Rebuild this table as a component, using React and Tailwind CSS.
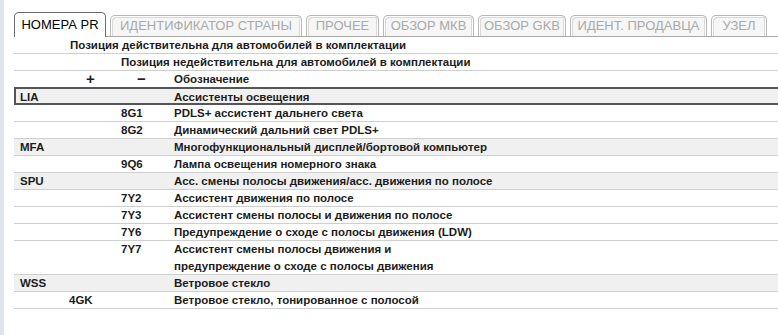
const tabs = [
  { label: "НОМЕРА PR", w: "w-[92px]", active: true },
  { label: "ИДЕНТИФИКАТОР СТРАНЫ", w: "w-[192px]" },
  { label: "ПРОЧЕЕ", w: "w-[73px]" },
  { label: "ОБЗОР МКВ", w: "w-[91px]" },
  { label: "ОБЗОР GKB", w: "w-[88px]" },
  { label: "ИДЕНТ. ПРОДАВЦА", w: "w-[137px]" },
  { label: "УЗЕЛ", w: "w-[56px]" },
];

// family: code in first column, grey row
// plus: code in "+" column, minus: code in "-" column
const rows = [
  { family: "LIA", text: "Ассистенты освещения", first: true },
  { minus: "8G1", text: "PDLS+ ассистент дальнего света" },
  { minus: "8G2", text: "Динамический дальний свет PDLS+" },
  { family: "MFA", text: "Многофункциональный дисплей/бортовой компьютер" },
  { minus: "9Q6", text: "Лампа освещения номерного знака" },
  { family: "SPU", text: "Асс. смены полосы движения/асс. движения по полосе" },
  { minus: "7Y2", text: "Ассистент движения по полосе" },
  { minus: "7Y3", text: "Ассистент смены полосы и движения по полосе" },
  { minus: "7Y6", text: "Предупреждение о сходе с полосы движения (LDW)" },
  {
    minus: "7Y7",
    text: "Ассистент смены полосы движения и",
    text2: "предупреждение о сходе с полосы движения",
  },
  { family: "WSS", text: "Ветровое стекло" },
  { plus: "4GK", text: "Ветровое стекло, тонированное с полосой" },
];

function Row({ row }) {
  const grey = !!row.family;
  let cls = "flex border-b border-[#cfcfcf]";
  if (row.first) cls = "flex border-y-2 border-l-2 border-[#555] bg-[#f0f0f0]";
  else if (grey) cls += " bg-[#f0f0f0]";
  const h = row.first ? "h-[18px]" : row.text2 ? "h-[34px]" : "h-[17px]";
  return (
    <div className={`${cls} ${h}`}>
      <div className={`${row.first ? "w-[54px] pl-[4px]" : "w-[56px] pl-[6px]"} leading-[16px]`}>
        {row.family}
      </div>
      <div className="w-[51px] pl-[-2px] leading-[16px]">
        <span className="-ml-[1px]">{row.plus}</span>
      </div>
      <div className="w-[53px] leading-[16px]">{row.minus}</div>
      <div className="flex-1 leading-[16px]">
        <div className={row.text2 ? "h-[17px] leading-[17px]" : ""}>{row.text}</div>
        {row.text2 && <div className="leading-[16px]">{row.text2}</div>}
      </div>
    </div>
  );
}

export default function App() {
  return (
    <div
      className="w-[778px] h-[335px] bg-white flex overflow-hidden text-[#1c1c1c]"
      style={{ fontFamily: '"Liberation Sans", Arial, sans-serif' }}
    >
      <div className="w-[4px] bg-[#dde4ec] shrink-0" />
      <div className="flex-1 pl-[10px] pt-[12px]">
        {/* tabs */}
        <div className="flex items-end gap-[4px] h-[25px] border-b border-[#a8a8a8]">
          {tabs.map((t) =>
            t.active ? (
              <div
                key={t.label}
                className={`${t.w} h-[25px] -mb-[1px] bg-white border border-b-0 border-[#6a6a6a] rounded-t-[5px] text-[13px] text-black flex items-center justify-center`}
              >
                {t.label}
              </div>
            ) : (
              <div
                key={t.label}
                className={`${t.w} h-[21px] bg-[#f6f6f6] border border-b-0 border-[#b8b8b8] rounded-t-[5px] shadow-[inset_1px_1px_0_#fff,inset_2px_2px_0_#d8d8d8,inset_-1px_0_0_#fff,inset_-2px_0_0_#d8d8d8] text-[13px] text-[#a9a9a9] flex items-center justify-center`}
              >
                {t.label}
              </div>
            )
          )}
        </div>

        {/* table */}
        <div className="font-bold text-[11.5px]">
          <div className="h-[17px] border-b border-[#cfcfcf] pl-[56px] leading-[16px]">
            Позиция действительна для автомобилей в комплектации
          </div>
          <div className="h-[17px] border-b border-[#cfcfcf] pl-[107px] leading-[16px]">
            Позиция недействительна для автомобилей в комплектации
          </div>
          <div className="h-[16px] flex leading-[16px]">
            <div className="w-[56px]" />
            <div className="w-[51px] pl-[16px] text-[15px]">+</div>
            <div className="w-[53px] pl-[16px] text-[15px]">−</div>
            <div>Обозначение</div>
          </div>
          {rows.map((r, i) => (
            <Row key={i} row={r} />
          ))}
        </div>
      </div>
    </div>
  );
}
